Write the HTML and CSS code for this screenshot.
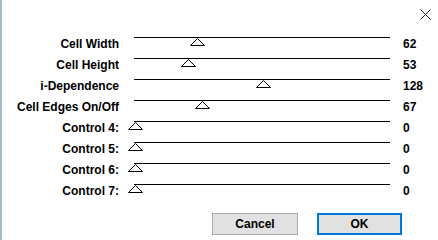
FILE: index.html
```html
<!DOCTYPE html>
<html>
<head>
<meta charset="utf-8">
<link rel="stylesheet" href="styles.css">
</head>
<body>
<div class="dialog">
  <div class="titlebar">
    <svg class="close" width="11" height="11" viewBox="0 0 11 11"><path d="M0.5 0.5 L10.5 10.5 M10.5 0.5 L0.5 10.5" stroke="#222" stroke-width="1" fill="none"/></svg>
  </div>
  <div class="rows">
    <div class="row"><span class="label">Cell Width</span><div class="track"><svg class="thumb" style="--v:62" width="15" height="8" viewBox="0 0 15 8"><polygon points="7.5,0.5 0.5,7.5 14.5,7.5" fill="#fff" stroke="#000"/></svg></div><span class="value">62</span></div>
    <div class="row"><span class="label">Cell Height</span><div class="track"><svg class="thumb" style="--v:53" width="15" height="8" viewBox="0 0 15 8"><polygon points="7.5,0.5 0.5,7.5 14.5,7.5" fill="#fff" stroke="#000"/></svg></div><span class="value">53</span></div>
    <div class="row"><span class="label">i-Dependence</span><div class="track"><svg class="thumb" style="--v:128" width="15" height="8" viewBox="0 0 15 8"><polygon points="7.5,0.5 0.5,7.5 14.5,7.5" fill="#fff" stroke="#000"/></svg></div><span class="value">128</span></div>
    <div class="row"><span class="label">Cell Edges On/Off</span><div class="track"><svg class="thumb" style="--v:67" width="15" height="8" viewBox="0 0 15 8"><polygon points="7.5,0.5 0.5,7.5 14.5,7.5" fill="#fff" stroke="#000"/></svg></div><span class="value">67</span></div>
    <div class="row"><span class="label">Control 4:</span><div class="track"><svg class="thumb" style="--v:0" width="15" height="8" viewBox="0 0 15 8"><polygon points="7.5,0.5 0.5,7.5 14.5,7.5" fill="#fff" stroke="#000"/></svg></div><span class="value">0</span></div>
    <div class="row"><span class="label">Control 5:</span><div class="track"><svg class="thumb" style="--v:0" width="15" height="8" viewBox="0 0 15 8"><polygon points="7.5,0.5 0.5,7.5 14.5,7.5" fill="#fff" stroke="#000"/></svg></div><span class="value">0</span></div>
    <div class="row"><span class="label">Control 6:</span><div class="track"><svg class="thumb" style="--v:0" width="15" height="8" viewBox="0 0 15 8"><polygon points="7.5,0.5 0.5,7.5 14.5,7.5" fill="#fff" stroke="#000"/></svg></div><span class="value">0</span></div>
    <div class="row"><span class="label">Control 7:</span><div class="track"><svg class="thumb" style="--v:0" width="15" height="8" viewBox="0 0 15 8"><polygon points="7.5,0.5 0.5,7.5 14.5,7.5" fill="#fff" stroke="#000"/></svg></div><span class="value">0</span></div>
  </div>
  <div class="buttons">
    <button class="btn">Cancel</button>
    <button class="btn btn-default">OK</button>
  </div>
</div>
</body>
</html>
```
FILE: styles.css
```css
html, body {
  margin: 0;
  padding: 0;
  background: #fff;
}
.dialog {
  width: 438px;
  height: 240px;
  box-sizing: border-box;
  border-left: 2px solid #a9b8d6;
  background: #fff;
  font-family: "Liberation Sans", Arial, sans-serif;
  font-size: 12px;
  font-weight: bold;
  color: #000;
  display: flex;
  flex-direction: column;
}
.titlebar {
  height: 37px;
  box-sizing: border-box;
  padding-top: 9px;
  padding-right: 7px;
  display: flex;
  justify-content: flex-end;
  align-items: flex-start;
}
.close {
  display: block;
}
.rows {
  display: flex;
  flex-direction: column;
}
.row {
  height: 21px;
  display: grid;
  grid-template-columns: 117px 271px 1fr;
  align-items: start;
}
.label {
  text-align: right;
  line-height: 14px;
  white-space: nowrap;
}
.track {
  margin-left: 15px;
  height: 20px;
  border-top: 1px solid #000;
  position: relative;
}
.thumb {
  position: absolute;
  top: 0;
  left: calc(var(--v) * 1px - 6.5px);
  display: block;
}
.value {
  padding-left: 13px;
  line-height: 14px;
}
.buttons {
  display: flex;
  gap: 19px;
  padding-left: 210px;
  margin-top: 8px;
}
.btn {
  width: 86px;
  height: 22px;
  box-sizing: border-box;
  background: #e1e1e1;
  border: 1px solid #adadad;
  font-family: "Liberation Sans", Arial, sans-serif;
  font-size: 12px;
  font-weight: bold;
  color: #000;
  padding: 0;
  margin: 0;
}
.btn-default {
  width: 85px;
  border: 2px solid #0078d7;
}
```
